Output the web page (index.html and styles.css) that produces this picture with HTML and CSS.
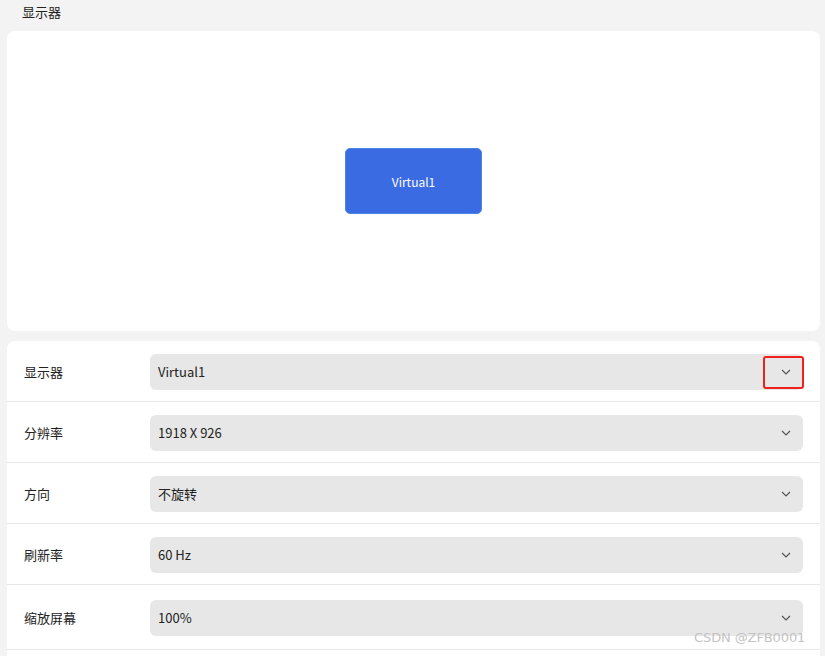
FILE: index.html
```html
<!DOCTYPE html>
<html lang="zh">
<head>
<meta charset="utf-8">
<link rel="stylesheet" href="styles.css">
</head>
<body>
<div class="page">
  <div class="title">显示器</div>
  <div class="card preview">
    <div class="monitor">Virtual1</div>
  </div>
  <div class="card settings">
    <div class="row">
      <div class="label">显示器</div>
      <div class="combo"><span>Virtual1</span>
        <svg class="chev" width="10" height="6" viewBox="0 0 10 6"><path d="M1 1 L5 5 L9 1" fill="none" stroke="#555" stroke-width="1.2"/></svg>
        <div class="highlight"></div>
      </div>
    </div>
    <div class="row">
      <div class="label">分辨率</div>
      <div class="combo"><span>1918 X 926</span>
        <svg class="chev" width="10" height="6" viewBox="0 0 10 6"><path d="M1 1 L5 5 L9 1" fill="none" stroke="#555" stroke-width="1.2"/></svg>
      </div>
    </div>
    <div class="row">
      <div class="label">方向</div>
      <div class="combo"><span>不旋转</span>
        <svg class="chev" width="10" height="6" viewBox="0 0 10 6"><path d="M1 1 L5 5 L9 1" fill="none" stroke="#555" stroke-width="1.2"/></svg>
      </div>
    </div>
    <div class="row">
      <div class="label">刷新率</div>
      <div class="combo"><span>60 Hz</span>
        <svg class="chev" width="10" height="6" viewBox="0 0 10 6"><path d="M1 1 L5 5 L9 1" fill="none" stroke="#555" stroke-width="1.2"/></svg>
      </div>
    </div>
    <div class="row row-tall">
      <div class="label">缩放屏幕</div>
      <div class="combo"><span>100%</span>
        <svg class="chev" width="10" height="6" viewBox="0 0 10 6"><path d="M1 1 L5 5 L9 1" fill="none" stroke="#555" stroke-width="1.2"/></svg>
      </div>
    </div>
    <div class="row row-empty"></div>
  </div>
  <div class="watermark">CSDN @ZFB0001</div>
</div>
</body>
</html>
```
FILE: styles.css
```css
html, body {
  margin: 0;
  padding: 0;
  background: #f3f3f3;
  overflow: hidden;
}
body {
  font-family: "Noto Sans CJK SC", "Noto Sans", sans-serif;
  color: #222;
}
.page {
  position: relative;
  width: 825px;
  height: 656px;
  overflow: hidden;
  padding: 0 5px 0 7px;
  box-sizing: border-box;
}
.title {
  height: 31px;
  padding-left: 15px;
  font-size: 13px;
  line-height: 24px;
  color: #222;
}
.card {
  background: #fff;
  border-radius: 8px;
}
.preview {
  height: 300px;
  display: flex;
  justify-content: center;
  padding-top: 117px;
  box-sizing: border-box;
}
.monitor {
  width: 137px;
  height: 66px;
  box-sizing: border-box;
  background: #3b6be2;
  border: 1px solid #4a86e6;
  border-radius: 5px;
  color: #fff;
  font-size: 12px;
  display: flex;
  align-items: center;
  justify-content: center;
}
.settings {
  margin-top: 10px;
  height: 400px;
}
.row {
  display: flex;
  align-items: center;
  height: 61px;
  border-bottom: 1px solid #e8e8e8;
  box-sizing: border-box;
  padding: 1px 17px 0 17px;
}
.row-tall {
  height: 65px;
}
.row-empty {
  border-bottom: none;
}
.label {
  width: 126px;
  font-size: 13px;
  color: #222;
}
.combo {
  position: relative;
  flex: 1;
  height: 36px;
  background: #e7e7e7;
  border-radius: 6px;
  display: flex;
  align-items: center;
  padding: 0 12px 0 8px;
  font-size: 13px;
  color: #222;
}
.combo span {
  flex: 1;
}
.chev {
  display: block;
}
.highlight {
  position: absolute;
  right: -1px;
  top: 2px;
  width: 41px;
  height: 33px;
  box-sizing: border-box;
  border: 2px solid #f0201a;
  border-radius: 3px;
}
.watermark {
  position: absolute;
  left: 694px;
  top: 630px;
  font-family: "DejaVu Sans", sans-serif;
  font-size: 13px;
  color: #c4c4c4;
  letter-spacing: -0.1px;
}
```
